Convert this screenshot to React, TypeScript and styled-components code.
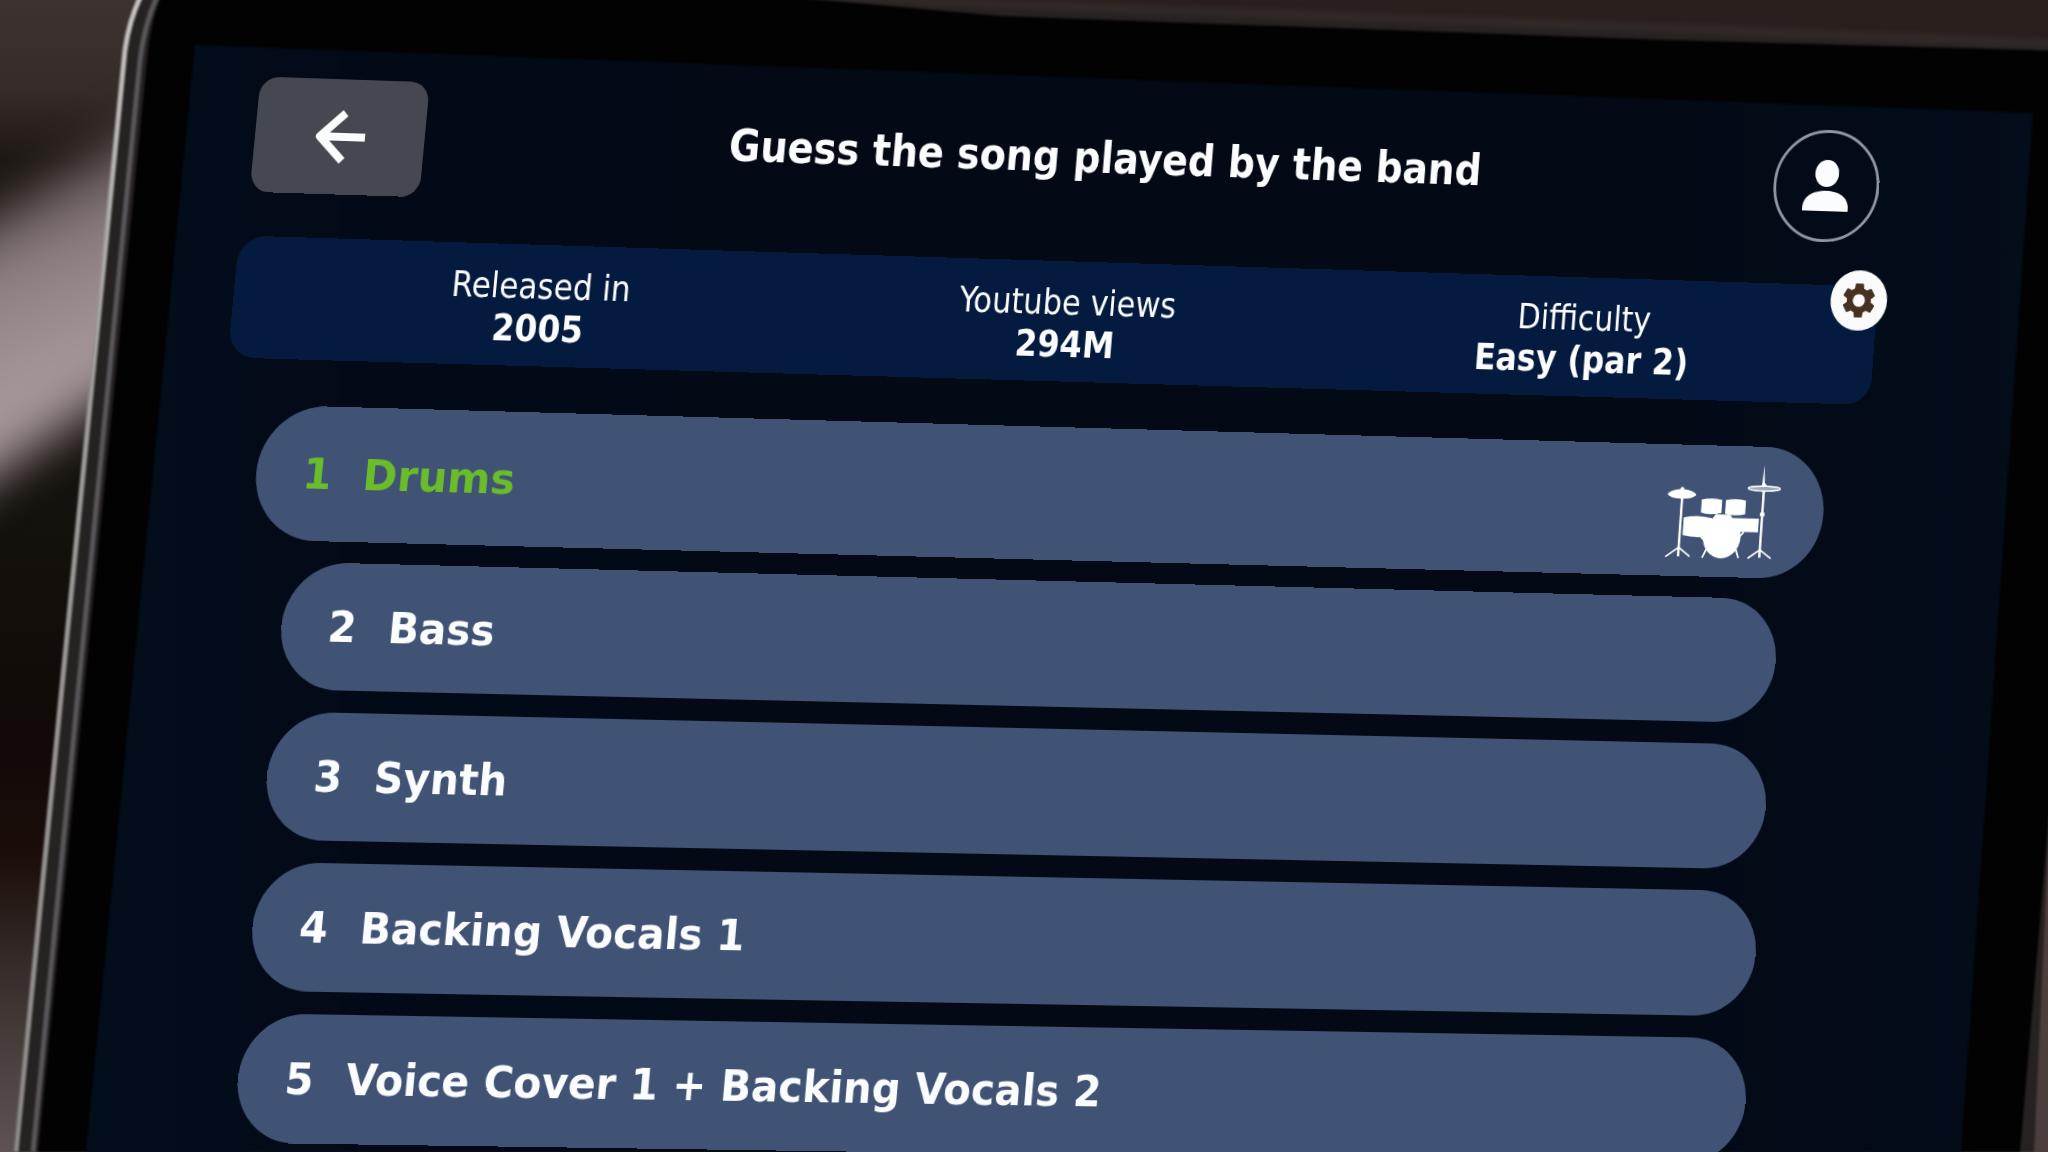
import React, { useLayoutEffect, useState } from 'react';
import styled, { createGlobalStyle } from 'styled-components';
import { MdSettings } from 'react-icons/md';

const GlobalStyle = createGlobalStyle`
  * { box-sizing: border-box; }
  html, body { margin: 0; height: 100%; overflow: hidden; background: #120e0c; }
`;

type Point = [number, number];

/* Corners of the tilted interface, as shares of the window: TL, TR, BR, BL. */
const CORNERS: Point[] = [
  [115.6 / 2048, -5.2 / 1152],
  [2028.7 / 2048, 62.8 / 1152],
  [1956.3 / 2048, 1189.4 / 1152],
  [-1.5 / 2048, 1162.2 / 1152],
];

/* Projective map that carries a w x h box onto the four corners. */
function project(w: number, h: number): string {
  const [p1, p2, p3, p4] = CORNERS.map(([x, y]) => [x * w, y * h]);
  const dx1 = p2[0] - p3[0];
  const dx2 = p4[0] - p3[0];
  const sx = p1[0] - p2[0] + p3[0] - p4[0];
  const dy1 = p2[1] - p3[1];
  const dy2 = p4[1] - p3[1];
  const sy = p1[1] - p2[1] + p3[1] - p4[1];
  const den = dx1 * dy2 - dx2 * dy1;
  const g = (sx * dy2 - dx2 * sy) / den;
  const k = (dx1 * sy - sx * dy1) / den;
  const m = [
    (p2[0] - p1[0] + g * p2[0]) / w, (p2[1] - p1[1] + g * p2[1]) / w, 0, g / w,
    (p4[0] - p1[0] + k * p4[0]) / h, (p4[1] - p1[1] + k * p4[1]) / h, 0, k / h,
    0, 0, 1, 0,
    p1[0], p1[1], 0, 1,
  ];
  return `matrix3d(${m.join(',')})`;
}

function useProjection() {
  const [value, setValue] = useState(() => project(window.innerWidth, window.innerHeight));
  useLayoutEffect(() => {
    const update = () => setValue(project(window.innerWidth, window.innerHeight));
    window.addEventListener('resize', update);
    return () => window.removeEventListener('resize', update);
  }, []);
  return value;
}

const Scene = styled.div`
  position: relative;
  height: 100vh;
  overflow: hidden;
  font-family: 'DejaVu Sans Condensed', 'DejaVu Sans', sans-serif;
  color: #fbfcfe;
`;

const Photo = styled.svg`
  position: absolute;
  inset: 0;
  width: 100%;
  height: 100%;
`;

const Surface = styled.main`
  position: relative;
  display: flex;
  flex-direction: column;
  min-height: 100vh;
  padding: 77px 150px 20px 152px;
  transform-origin: 0 0;
`;

const Header = styled.header`
  display: flex;
  align-items: center;
  justify-content: space-between;
  padding: 0 6px;
  margin-bottom: 44px;
`;

const BackButton = styled.button`
  display: grid;
  place-items: center;
  width: 176px;
  height: 116px;
  border: 0;
  border-radius: 20px;
  background: #454850;
  color: inherit;
`;

const Title = styled.h1`
  margin: 0;
  padding-bottom: 8px;
  font-size: 45px;
  line-height: 60px;
  font-weight: 700;
  white-space: nowrap;
`;

const ProfileButton = styled.button`
  display: grid;
  place-items: center;
  width: 116px;
  height: 116px;
  border: 3px solid #9296a0;
  border-radius: 50%;
  background: transparent;
  color: inherit;
`;

const Stats = styled.section`
  position: relative;
  padding: 20px 40px 16px;
  margin-bottom: 53px;
  border-radius: 28px;
  background: #051a3f;
`;

const StatList = styled.dl`
  display: grid;
  grid-template-columns: repeat(3, 1fr);
  margin: 0;
  text-align: center;
  line-height: 43px;
`;

const Stat = styled.div``;

const StatName = styled.dt`
  font-size: 36px;
  font-weight: 400;
`;

const StatValue = styled.dd`
  margin: 0;
  font-size: 38px;
  font-weight: 700;
`;

const SettingsButton = styled.button`
  position: absolute;
  top: -16px;
  right: -11px;
  display: grid;
  place-items: center;
  width: 62px;
  height: 62px;
  padding: 0;
  border: 0;
  border-radius: 50%;
  background: #fbfafa;
  color: #46321f;
  font-size: 44px;
`;

const TrackList = styled.ol`
  display: flex;
  flex-direction: column;
  gap: 22px;
  margin: 0;
  padding: 0 84px 0 82px;
  list-style: none;
`;

const TrackItem = styled.li<{ $active: boolean }>`
  margin: ${p => (p.$active ? '-7px -41px -1px' : '0')};
`;

const Track = styled.button<{ $active: boolean }>`
  display: flex;
  align-items: center;
  width: 100%;
  height: ${p => (p.$active ? '134px' : '126px')};
  padding: 0 48px;
  border: 0;
  border-radius: 67px;
  background: #405375;
  color: ${p => (p.$active ? '#6abc2a' : '#fbfcfe')};
  font-family: 'DejaVu Sans', sans-serif;
  font-size: ${p => (p.$active ? '43px' : '42px')};
  font-weight: 700;
  text-align: left;
`;

const TrackNumber = styled.span`
  width: 62px;
`;

const TrackName = styled.span`
  flex: 1;
`;

const tracks = [
  'Drums',
  'Bass',
  'Synth',
  'Backing Vocals 1',
  'Voice Cover 1 + Backing Vocals 2',
];

const stats = [
  ['Released in', '2005'],
  ['Youtube views', '294M'],
  ['Difficulty', 'Easy (par 2)'],
];

const ArrowIcon = () => (
  <svg width="54" height="54" viewBox="0 0 54 54" fill="none" stroke="#fbfcfe" strokeWidth="8" strokeLinejoin="round" aria-hidden="true">
    <path d="M5 27H53M31 3L6 27L31 51" />
  </svg>
);

const PersonIcon = () => (
  <svg width="50" height="54" viewBox="0 0 50 54" fill="#fbfcfe" aria-hidden="true">
    <ellipse cx="25" cy="14" rx="13" ry="14" />
    <path d="M0 53V50C0 38 11 32 25 32S50 38 50 50V53Z" />
  </svg>
);

const DrumKitIcon = () => (
  <svg width="124" height="98" viewBox="10 -10 340 282" preserveAspectRatio="none" fill="#fff" stroke="#fff" aria-hidden="true">
    <g stroke="none">
      <path d="M13 85Q20 72 50 69Q50 63 56 63T62 69Q92 72 99 85Q90 97 56 97T13 85Z" />
      <path d="M116 98Q146 90 177 98V136Q146 145 116 136Z" />
      <path d="M188 98Q218 90 248 98V138Q218 146 188 138Z" />
      <path d="M66 152Q100 142 150 152L160 204Q110 214 66 204Z" />
      <path d="M205 150H290V190H205Z" />
      <path d="M160 140H205L215 158H148Z" />
      <ellipse cx="183" cy="206" rx="56" ry="63" />
      <path d="M296 -8L293 50H301Z" />
      <path d="M290 55L294 46H303L308 55L304 73H294Z" />
      <path d="M292 132H306V142H292Z" />
    </g>
    <ellipse cx="300" cy="61" rx="48" ry="7" strokeWidth="4" fill="#9aa5ba" />
    <g fill="none" strokeWidth="6">
      <path d="M57 95V266M299 72V264" strokeWidth="7" />
      <path d="M19 268L57 240L91 266M264 267L299 241L333 266" strokeWidth="5" />
      <path d="M140 242L128 269M227 240L236 267M118 205L136 222M248 190L234 206" strokeWidth="5" />
    </g>
  </svg>
);

const Backdrop = () => (
  <Photo viewBox="0 0 2048 1152" preserveAspectRatio="none" aria-hidden="true">
    <defs>
      <filter id="soft" x="-50%" y="-50%" width="200%" height="200%" colorInterpolationFilters="sRGB">
        <feGaussianBlur stdDeviation="24" />
      </filter>
      <filter id="rim" colorInterpolationFilters="sRGB">
        <feGaussianBlur stdDeviation="1" />
      </filter>
      <filter id="haze" colorInterpolationFilters="sRGB">
        <feGaussianBlur stdDeviation="3" />
      </filter>
      <linearGradient id="wall" x1="0" y1="0" x2="0" y2="1">
        <stop offset="0" stopColor="#3d3230" />
        <stop offset="0.08" stopColor="#352b29" />
        <stop offset="0.14" stopColor="#1d1712" />
        <stop offset="0.45" stopColor="#15110c" />
        <stop offset="0.65" stopColor="#110a08" />
        <stop offset="0.74" stopColor="#1b0d09" />
        <stop offset="0.86" stopColor="#3b3230" />
        <stop offset="1" stopColor="#5e5352" />
      </linearGradient>
      <linearGradient id="blur" gradientUnits="userSpaceOnUse" x1="30" y1="150" x2="110" y2="350">
        <stop offset="0" stopColor="#4c4040" />
        <stop offset="0.5" stopColor="#8c7e81" />
        <stop offset="1" stopColor="#a5969a" />
      </linearGradient>
      <linearGradient id="glass" x1="0" y1="0" x2="1" y2="0">
        <stop offset="0" stopColor="#030e1d" />
        <stop offset="0.15" stopColor="#030a17" />
        <stop offset="0.8" stopColor="#030a16" />
        <stop offset="1" stopColor="#040d1b" />
      </linearGradient>
      <linearGradient id="edge" x1="0" y1="0" x2="0" y2="1">
        <stop offset="0" stopColor="#c9c5c5" />
        <stop offset="0.35" stopColor="#a09b9c" />
        <stop offset="1" stopColor="#8f898a" />
      </linearGradient>
    </defs>
    <rect width="2048" height="1152" fill="url(#wall)" />
    <path d="M-120 290L200 90V335L-120 555Z" fill="url(#blur)" filter="url(#soft)" />
    <path d="M900 -20H2068V60H900Z" fill="#291f1d" />
    <path d="M1980 1152L2060 700V1152Z" fill="#4c3e3c" />
    <path d="M14 1152L124 50Q130 12 146 -20H600L1000 2L2048 42V850L2034 1152Z" fill="#262221" filter="url(#rim)" />
    <path d="M580 -16L1000 4L1668 28L2060 44" fill="none" stroke="#352c2b" strokeWidth="7" filter="url(#haze)" />
    <path d="M38 1152L148 50Q152 14 168 -20H600L1000 16L1668 40L2060 51V690L2020 1152Z" fill="#020202" filter="url(#rim)" />
    <g fill="none" filter="url(#rim)">
      <path d="M16 1152L125 50Q130 14 146 -14" stroke="url(#edge)" strokeWidth="5" />
      <path d="M33 1152L140 60Q145 20 160 -10" stroke="#59575a" strokeWidth="5" />
    </g>
    <path d="M195 45L2033 113L1961 1152H86Z" fill="url(#glass)" filter="url(#rim)" />
  </Photo>
);

export default function App() {
  const projection = useProjection();
  return (
    <Scene>
      <GlobalStyle />
      <Backdrop />
      <Surface style={{ transform: projection }}>
        <Header>
          <BackButton type="button" aria-label="Back">
            <ArrowIcon />
          </BackButton>
          <Title>Guess the song played by the band</Title>
          <ProfileButton type="button" aria-label="Profile">
            <PersonIcon />
          </ProfileButton>
        </Header>
        <Stats>
          <StatList>
            {stats.map(([name, value]) => (
              <Stat key={name}>
                <StatName>{name}</StatName>
                <StatValue>{value}</StatValue>
              </Stat>
            ))}
          </StatList>
          <SettingsButton type="button" aria-label="Settings">
            <MdSettings />
          </SettingsButton>
        </Stats>
        <TrackList>
          {tracks.map((name, i) => (
            <TrackItem key={name} $active={i === 0}>
              <Track type="button" $active={i === 0}>
                <TrackNumber>{i + 1}</TrackNumber>
                <TrackName>{name}</TrackName>
                {i === 0 && <DrumKitIcon />}
              </Track>
            </TrackItem>
          ))}
        </TrackList>
      </Surface>
    </Scene>
  );
}
